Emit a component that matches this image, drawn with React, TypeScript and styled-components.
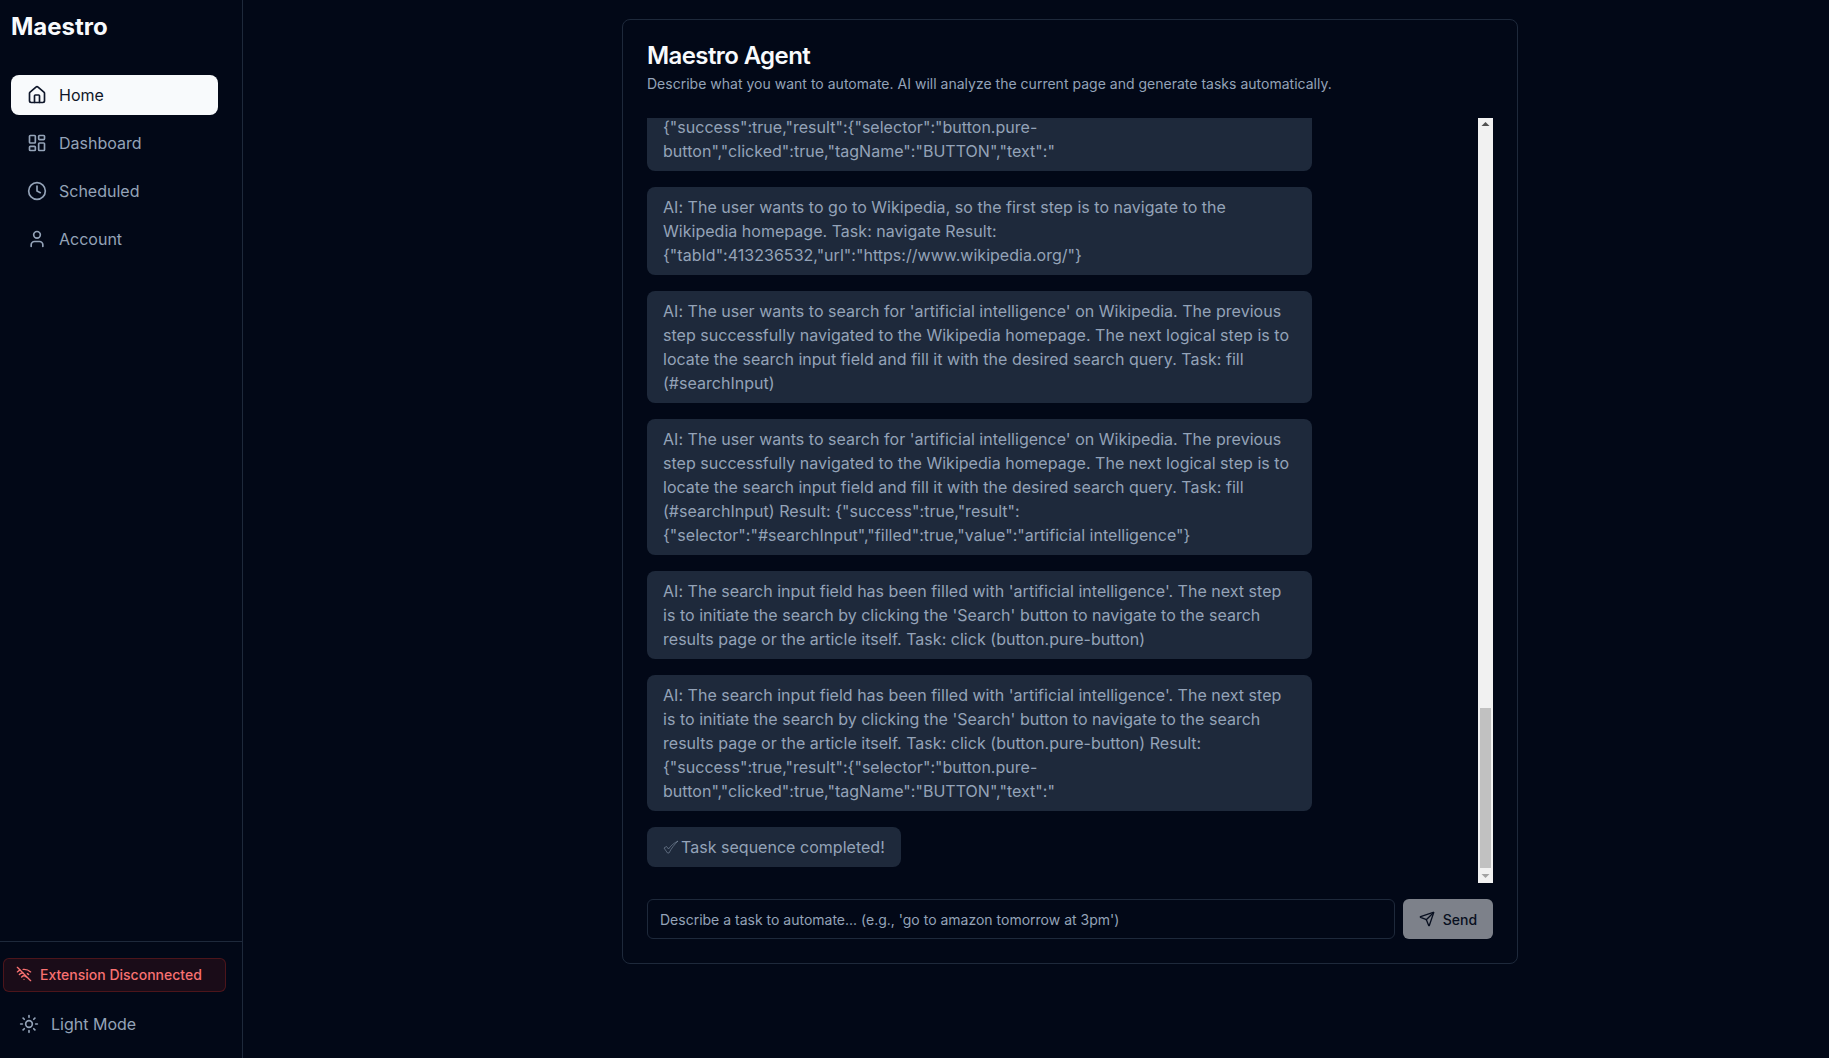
import React, { useLayoutEffect, useRef } from 'react';
import styled, { createGlobalStyle } from 'styled-components';
import { Clock, Home, LayoutDashboard, Send, Sun, User, WifiOff } from 'lucide-react';

const GlobalStyle = createGlobalStyle`
  * {
    box-sizing: border-box;
  }
  html, body {
    margin: 0;
    height: 100%;
    background: #020817;
    font-family: Inter, "Noto Sans", sans-serif;
  }
`;

const Layout = styled.div`
  display: flex;
  width: 100%;
  height: 1058px;
  overflow: hidden;
  background: #020817;
`;

const Sidebar = styled.aside`
  width: 243px;
  flex-shrink: 0;
  display: flex;
  flex-direction: column;
  border-right: 1px solid #1e293b;
`;

const Logo = styled.div`
  padding: 11px 0 0 11px;
  font-size: 24px;
  line-height: 32px;
  font-weight: 700;
  color: #f8fafc;
`;

const Nav = styled.nav`
  flex: 1;
  display: flex;
  flex-direction: column;
  gap: 8px;
  padding: 32px 24px 0 11px;
`;

const NavItem = styled.a<{ $active?: boolean }>`
  display: flex;
  align-items: center;
  gap: 12px;
  height: 40px;
  padding: 0 16px;
  border-radius: 8px;
  font-size: 16px;
  font-weight: 400;
  color: ${({ $active }) => ($active ? '#0f172a' : '#94a3b8')};
  background: ${({ $active }) => ($active ? '#f8fafc' : 'transparent')};
`;

const SidebarFooter = styled.div`
  height: 117px;
  display: flex;
  flex-direction: column;
  border-top: 1px solid #1e293b;
  padding: 16px 16px 0 3px;
`;

const StatusBadge = styled.div`
  display: flex;
  align-items: center;
  gap: 8px;
  height: 34px;
  padding: 0 12px 2px;
  border-radius: 6px;
  border: 1px solid rgba(127, 29, 29, 0.5);
  background: rgba(127, 29, 29, 0.2);
  color: #f87171;
  font-size: 14px;
  font-weight: 500;
`;

const ThemeToggle = styled.div`
  display: flex;
  align-items: center;
  gap: 12px;
  height: 40px;
  margin-top: 12px;
  padding-left: 16px;
  font-size: 16px;
  color: #94a3b8;
`;

const Main = styled.main`
  flex: 1;
  display: flex;
  justify-content: center;
  align-items: flex-start;
  padding: 19px 0 0 68px;
`;

const Card = styled.section`
  width: 896px;
  height: 945px;
  display: flex;
  flex-direction: column;
  border: 1px solid #1e293b;
  border-radius: 8px;
  padding: 24px;
`;

const Title = styled.h1`
  margin: 0;
  font-size: 24px;
  line-height: 24px;
  font-weight: 600;
  letter-spacing: -0.6px;
  color: #f8fafc;
`;

const Subtitle = styled.p`
  margin: 6px 0 0;
  font-size: 14px;
  line-height: 20px;
  letter-spacing: 0.012px;
  color: #94a3b8;
`;

const LogArea = styled.div`
  flex: 1;
  min-height: 0;
  margin-top: 24px;
  display: flex;
`;

const Messages = styled.div`
  flex: 1;
  min-width: 0;
  overflow: hidden;
  display: flex;
  flex-direction: column;
  align-items: flex-start;
  gap: 16px;
  padding-bottom: 16px;
`;

const ScrollBar = styled.div`
  width: 15px;
  flex-shrink: 0;
  display: flex;
  flex-direction: column;
  justify-content: flex-end;
  align-items: center;
  background: #f1f1f1;
`;

const ScrollArrow = styled.svg<{ $top?: boolean }>`
  width: 15px;
  height: 15px;
  flex-shrink: 0;
  margin-bottom: ${({ $top }) => ($top ? 'auto' : '0')};
  fill: ${({ $top }) => ($top ? '#505050' : '#a3a3a3')};
`;

const ScrollThumb = styled.div`
  width: 11px;
  height: 160px;
  flex-shrink: 0;
  background: #c1c1c1;
`;

const Bubble = styled.div`
  flex-shrink: 0;
  max-width: 80%;
  padding: 8px 16px;
  border-radius: 8px;
  background: #1e293b;
  color: #94a3b8;
  font-size: 16px;
  line-height: 24px;
  letter-spacing: 0.025px;
  overflow-wrap: anywhere;
`;

const DoneRow = styled.span`
  display: flex;
  align-items: center;
  gap: 2px;
`;

const Composer = styled.form`
  display: flex;
  gap: 8px;
  margin-top: 16px;
`;

const TaskInput = styled.input`
  flex: 1;
  height: 40px;
  padding: 0 12px;
  border: 1px solid #1e293b;
  border-radius: 6px;
  background: transparent;
  color: #f8fafc;
  font-family: inherit;
  font-size: 14px;
  &::placeholder {
    color: #94a3b8;
  }
`;

const SendButton = styled.button`
  display: flex;
  align-items: center;
  justify-content: center;
  gap: 8px;
  width: 90px;
  height: 40px;
  border: 0;
  border-radius: 6px;
  background: #f8fafc;
  color: #0f172a;
  font-family: inherit;
  font-size: 14px;
  font-weight: 500;
  opacity: 0.5;
`;

const navLinks = [
  { label: 'Home', icon: Home, active: true },
  { label: 'Dashboard', icon: LayoutDashboard },
  { label: 'Scheduled', icon: Clock },
  { label: 'Account', icon: User },
];

const clickResult =
  'Result: {"success":true,"result":{"selector":"button.pure-button","clicked":true,"tagName":"BUTTON","text":"';
const searchStep =
  "AI: The user wants to search for 'artificial intelligence' on Wikipedia. The previous step successfully navigated to the Wikipedia homepage. The next logical step is to locate the search input field and fill it with the desired search query. Task: fill (#searchInput)";
const clickStep =
  "AI: The search input field has been filled with 'artificial intelligence'. The next step is to initiate the search by clicking the 'Search' button to navigate to the search results page or the article itself. Task: click (button.pure-button)";

const run = [
  'AI: The user wants to go to Wikipedia, so the first step is to navigate to the Wikipedia homepage. Task: navigate Result: {"tabId":413236532,"url":"https://www.wikipedia.org/"}',
  searchStep,
  `${searchStep} Result: {"success":true,"result":{"selector":"#searchInput","filled":true,"value":"artificial intelligence"}`,
  clickStep,
  `${clickStep} ${clickResult}`,
];

const messages = [`${clickStep} ${clickResult}`, ...run];

const CheckMark: React.FC = () => (
  <svg width="16" height="16" viewBox="0 0 16 16" fill="none" stroke="#94a3b8" strokeOpacity="0.5" strokeWidth="1">
    <path d="M1 9 L3.5 7.5 L5.5 10 C8 6.5 11 4 15 2 C11.5 5.5 8.5 9 6 14 L4.5 14 Z" />
  </svg>
);

const App: React.FC = () => {
  const logRef = useRef<HTMLDivElement>(null);

  useLayoutEffect(() => {
    if (logRef.current) logRef.current.scrollTop = logRef.current.scrollHeight;
  }, []);

  return (
    <Layout>
      <GlobalStyle />
      <Sidebar>
        <Logo>Maestro</Logo>
        <Nav>
          {navLinks.map(({ label, icon: Icon, active }) => (
            <NavItem key={label} $active={active}>
              <Icon size={20} strokeWidth={2} />
              {label}
            </NavItem>
          ))}
        </Nav>
        <SidebarFooter>
          <StatusBadge>
            <WifiOff size={16} />
            Extension Disconnected
          </StatusBadge>
          <ThemeToggle>
            <Sun size={20} />
            Light Mode
          </ThemeToggle>
        </SidebarFooter>
      </Sidebar>
      <Main>
        <Card>
          <Title>Maestro Agent</Title>
          <Subtitle>Describe what you want to automate. AI will analyze the current page and generate tasks automatically.</Subtitle>
          <LogArea>
            <Messages ref={logRef}>
              {messages.map((text, i) => (
                <Bubble key={i}>{text}</Bubble>
              ))}
              <Bubble>
                <DoneRow>
                  <CheckMark />
                  Task sequence completed!
                </DoneRow>
              </Bubble>
            </Messages>
            <ScrollBar>
              <ScrollArrow $top viewBox="0 0 15 15">
                <polygon points="7.5,4 11.5,8 3.5,8" />
              </ScrollArrow>
              <ScrollThumb />
              <ScrollArrow viewBox="0 0 15 15">
                <polygon points="3.5,6 11.5,6 7.5,10" />
              </ScrollArrow>
            </ScrollBar>
          </LogArea>
          <Composer onSubmit={(e) => e.preventDefault()}>
            <TaskInput placeholder="Describe a task to automate... (e.g., 'go to amazon tomorrow at 3pm')" />
            <SendButton type="submit">
              <Send size={16} />
              Send
            </SendButton>
          </Composer>
        </Card>
      </Main>
    </Layout>
  );
};

export default App;
